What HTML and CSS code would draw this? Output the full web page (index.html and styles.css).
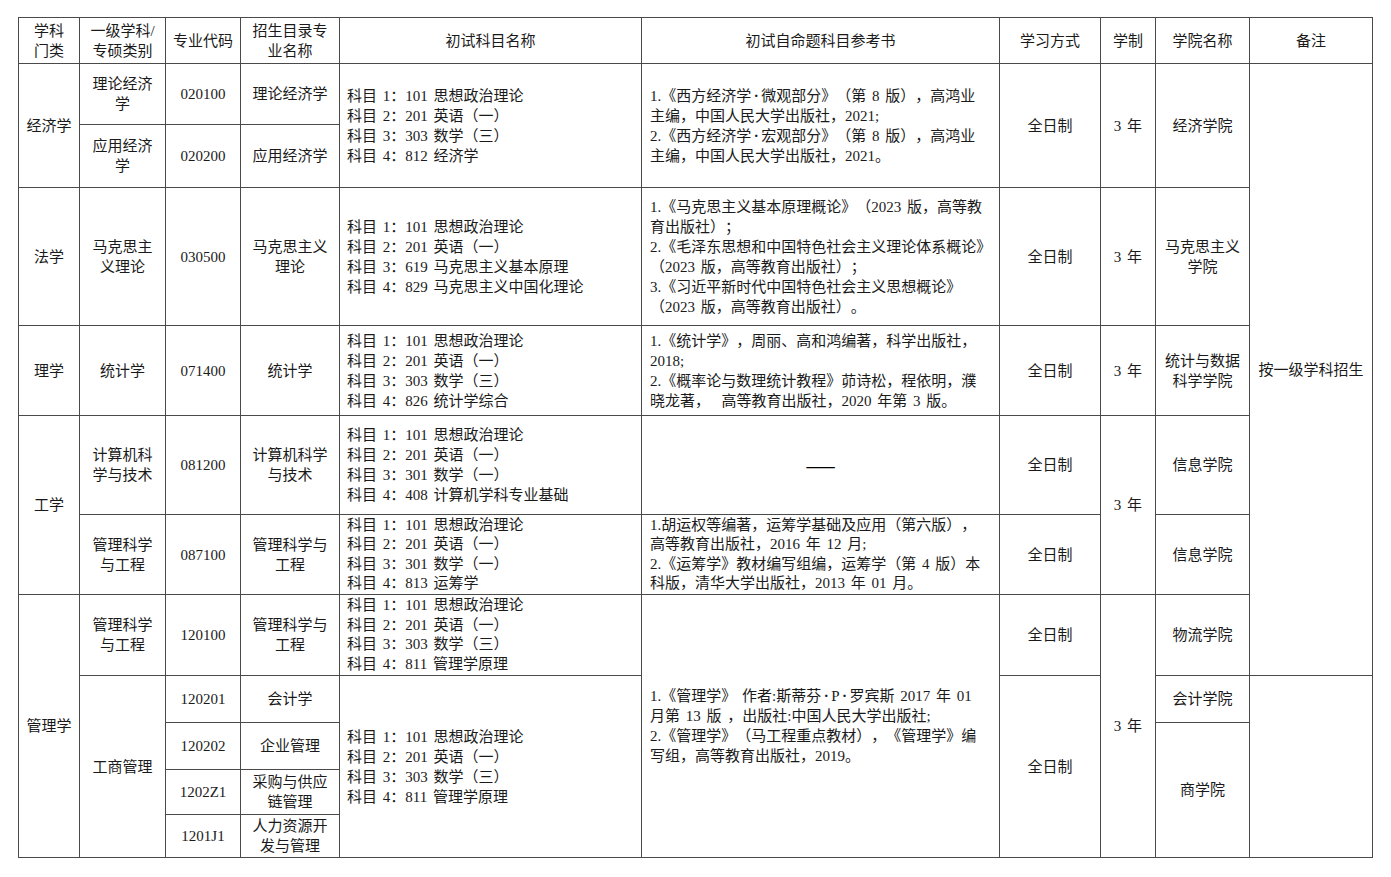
FILE: index.html
```html
<!DOCTYPE html>
<html lang="zh-CN">
<head>
<meta charset="utf-8">
<title>招生专业目录</title>
<link rel="stylesheet" href="styles.css">
</head>
<body>
<table class="plan">
  <colgroup>
    <col class="w1"><col class="w2"><col class="w3"><col class="w4"><col class="w5">
    <col class="w6"><col class="w7"><col class="w8"><col class="w9"><col class="w10">
  </colgroup>
  <tr class="h-head">
    <td>学科<br>门类</td>
    <td>一级学科/专硕类别</td>
    <td>专业代码</td>
    <td>招生目录专业名称</td>
    <td>初试科目名称</td>
    <td>初试自命题科目参考书</td>
    <td>学习方式</td>
    <td>学制</td>
    <td>学院名称</td>
    <td>备注</td>
  </tr>
  <tr class="h61">
    <td rowspan="2">经济学</td>
    <td>理论经济学</td>
    <td>020100</td>
    <td>理论经济学</td>
    <td rowspan="2" class="subj">科目 1：101 思想政治理论<br>科目 2：201 英语（一）<br>科目 3：303 数学（三）<br>科目 4：812 经济学</td>
    <td rowspan="2" class="book">1.《西方经济学<span class="dot">·</span>微观部分》（第 8 版），高鸿业<br>主编，中国人民大学出版社，2021;<br>2.《西方经济学<span class="dot">·</span>宏观部分》（第 8 版），高鸿业<br>主编，中国人民大学出版社，2021。</td>
    <td rowspan="2">全日制</td>
    <td rowspan="2">3 年</td>
    <td rowspan="2">经济学院</td>
    <td rowspan="7">按一级学科招生</td>
  </tr>
  <tr class="h63">
    <td>应用经济学</td>
    <td>020200</td>
    <td>应用经济学</td>
  </tr>
  <tr class="h138">
    <td>法学</td>
    <td>马克思主义理论</td>
    <td>030500</td>
    <td>马克思主义理论</td>
    <td class="subj">科目 1：101 思想政治理论<br>科目 2：201 英语（一）<br>科目 3：619 马克思主义基本原理<br>科目 4：829 马克思主义中国化理论</td>
    <td class="book">1.《马克思主义基本原理概论》（2023 版，高等教<br>育出版社）；<br>2.《毛泽东思想和中国特色社会主义理论体系概论》<br>（2023 版，高等教育出版社）；<br>3.《习近平新时代中国特色社会主义思想概论》<br>（2023 版，高等教育出版社）。</td>
    <td>全日制</td>
    <td>3 年</td>
    <td>马克思主义学院</td>
  </tr>
  <tr class="h90">
    <td>理学</td>
    <td>统计学</td>
    <td>071400</td>
    <td>统计学</td>
    <td class="subj">科目 1：101 思想政治理论<br>科目 2：201 英语（一）<br>科目 3：303 数学（三）<br>科目 4：826 统计学综合</td>
    <td class="book">1.《统计学》，周丽、高和鸿编著，科学出版社，<br>2018;<br>2.《概率论与数理统计教程》茆诗松，程依明，濮<br>晓龙著，&nbsp; 高等教育出版社，2020 年第 3 版。</td>
    <td>全日制</td>
    <td>3 年</td>
    <td>统计与数据科学学院</td>
  </tr>
  <tr class="h99">
    <td rowspan="2">工学</td>
    <td>计算机科学与技术</td>
    <td>081200</td>
    <td>计算机科学与技术</td>
    <td class="subj">科目 1：101 思想政治理论<br>科目 2：201 英语（一）<br>科目 3：301 数学（一）<br>科目 4：408 计算机学科专业基础</td>
    <td class="dash">——</td>
    <td>全日制</td>
    <td rowspan="2">3 年</td>
    <td>信息学院</td>
  </tr>
  <tr class="h80">
    <td>管理科学与工程</td>
    <td>087100</td>
    <td>管理科学与工程</td>
    <td class="subj tight">科目 1：101 思想政治理论<br>科目 2：201 英语（一）<br>科目 3：301 数学（一）<br>科目 4：813 运筹学</td>
    <td class="book tight">1.胡运权等编著，运筹学基础及应用（第六版），<br>高等教育出版社，2016 年 12 月;<br>2.《运筹学》教材编写组编，运筹学（第 4 版）本<br>科版，清华大学出版社，2013 年 01 月。</td>
    <td>全日制</td>
    <td>信息学院</td>
  </tr>
  <tr class="h81">
    <td rowspan="5">管理学</td>
    <td>管理科学与工程</td>
    <td>120100</td>
    <td>管理科学与工程</td>
    <td class="subj tight">科目 1：101 思想政治理论<br>科目 2：201 英语（一）<br>科目 3：303 数学（三）<br>科目 4：811 管理学原理</td>
    <td rowspan="5" class="book">1.《管理学》 作者:斯蒂芬<span class="dot">·</span>P<span class="dot">·</span>罗宾斯 2017 年 01<br>月第 13 版 ，出版社:中国人民大学出版社;<br>2.《管理学》（马工程重点教材），《管理学》编<br>写组，高等教育出版社，2019。</td>
    <td>全日制</td>
    <td rowspan="5">3 年</td>
    <td>物流学院</td>
  </tr>
  <tr class="h47">
    <td rowspan="4">工商管理</td>
    <td>120201</td>
    <td>会计学</td>
    <td rowspan="4" class="subj">科目 1：101 思想政治理论<br>科目 2：201 英语（一）<br>科目 3：303 数学（三）<br>科目 4：811 管理学原理</td>
    <td rowspan="4">全日制</td>
    <td>会计学院</td>
    <td rowspan="4"></td>
  </tr>
  <tr class="h47">
    <td>120202</td>
    <td>企业管理</td>
    <td rowspan="3">商学院</td>
  </tr>
  <tr class="h45">
    <td>1202Z1</td>
    <td>采购与供应链管理</td>
  </tr>
  <tr class="h43">
    <td>1201J1</td>
    <td>人力资源开发与管理</td>
  </tr>
</table>
</body>
</html>
```

FILE: styles.css
```css
html, body {
  margin: 0;
  padding: 0;
  background: #ffffff;
}

body {
  font-family: "Liberation Serif", "Noto Sans CJK SC", serif;
  font-size: 15px;
  color: #1a1a1a;
  text-spacing-trim: space-all;
}

.plan {
  border-collapse: collapse;
  table-layout: fixed;
  width: 1355px;
  margin: 17px 0 0 18px;
}

.w1 { width: 61px; }
.w2 { width: 86px; }
.w3 { width: 75px; }
.w4 { width: 99px; }
.w5 { width: 302px; }
.w6 { width: 358px; }
.w7 { width: 101px; }
.w8 { width: 55px; }
.w9 { width: 94px; }
.w10 { width: 123px; }

.plan td {
  border: 1px solid #4a4a4a;
  padding: 0 6px;
  text-align: center;
  vertical-align: middle;
  line-height: 20px;
  word-spacing: 2px;
  overflow: hidden;
}

.h-head { height: 46px; }
.h61 { height: 61px; }
.h63 { height: 63px; }
.h138 { height: 138px; }
.h90 { height: 90px; }
.h99 { height: 99px; }
.h80 { height: 80px; }
.h81 { height: 81px; }
.h47 { height: 47px; }
.h45 { height: 45px; }
.h43 { height: 43px; }

.plan td.subj {
  text-align: left;
  padding: 0 2px 0 7px;
  white-space: nowrap;
}

.plan td.book {
  text-align: left;
  padding: 0 2px 0 8px;
  white-space: nowrap;
}

.plan td.tight {
  line-height: 19.5px;
}

.plan td.dash {
  font-family: "Noto Sans CJK SC", sans-serif;
  font-size: 18px;
  color: #000000;
}

.dot {
  display: inline-block;
  width: 10px;
  text-align: center;
  font-weight: bold;
}
```
